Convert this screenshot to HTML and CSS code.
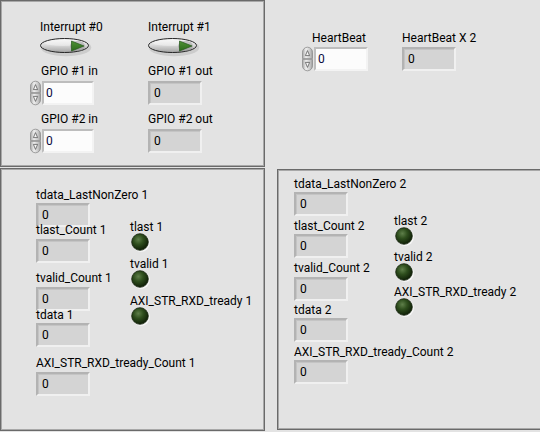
FILE: index.html
```html
<!DOCTYPE html>
<html>
<head>
<meta charset="utf-8">
<title>Front Panel</title>
<link rel="stylesheet" href="styles.css">
</head>
<body>
<svg class="defs" width="0" height="0" aria-hidden="true">
  <defs>
    <linearGradient id="gBtn" x1="0" y1="0" x2="0" y2="1">
      <stop offset="0" stop-color="#f8f8f8"/>
      <stop offset=".45" stop-color="#dddddd"/>
      <stop offset="1" stop-color="#a2a2a2"/>
    </linearGradient>
    <linearGradient id="gSpin" x1="0" y1="0" x2="1" y2="0">
      <stop offset="0" stop-color="#a6a6a6"/>
      <stop offset=".35" stop-color="#efefef"/>
      <stop offset=".75" stop-color="#c8c8c8"/>
      <stop offset="1" stop-color="#9a9a9a"/>
    </linearGradient>
    <radialGradient id="gLed" cx=".4" cy=".35" r=".65">
      <stop offset="0" stop-color="#5f7f4a"/>
      <stop offset=".45" stop-color="#2f4f1e"/>
      <stop offset="1" stop-color="#0f1f07"/>
    </radialGradient>
    <linearGradient id="gTri" x1="0" y1="0" x2="0" y2="1">
      <stop offset="0" stop-color="#4e9234"/>
      <stop offset="1" stop-color="#2c6a1c"/>
    </linearGradient>
    <symbol id="sBtn" viewBox="0 0 52 19">
      <ellipse cx="26" cy="9.6" rx="25.3" ry="8.6" fill="#b9b9b9" opacity=".55"/>
      <ellipse cx="24.5" cy="7.5" rx="24" ry="7" fill="url(#gBtn)" stroke="#262626" stroke-width="1"/>
      <ellipse cx="23" cy="5" rx="18" ry="3" fill="#ffffff" opacity=".35"/>
      <ellipse cx="37.5" cy="8" rx="7.5" ry="5.2" fill="#8f8f8f" opacity=".45"/>
      <path d="M31.5 3 L44 8 L31.5 13 Z" fill="url(#gTri)" stroke="#24561a" stroke-width=".7" stroke-linejoin="round"/>
    </symbol>
    <symbol id="sSpin" viewBox="0 0 13 26">
      <path d="M1.5 12.6 V6.2 A5 5 0 0 1 11.5 6.2 V12.6 Z" fill="url(#gSpin)" stroke="#8c8c8c" stroke-width=".8"/>
      <path d="M1.5 13.4 V19.8 A5 5 0 0 0 11.5 19.8 V13.4 Z" fill="url(#gSpin)" stroke="#8c8c8c" stroke-width=".8"/>
      <path d="M4.4 9.6 L6.5 4.6 L8.6 9.6 Z" fill="#f6f6f6" stroke="#5a5a5a" stroke-width=".8" stroke-linejoin="round"/>
      <path d="M4.4 16.4 L6.5 21.4 L8.6 16.4 Z" fill="#f6f6f6" stroke="#5a5a5a" stroke-width=".8" stroke-linejoin="round"/>
    </symbol>
    <symbol id="sLed" viewBox="0 0 20 20">
      <circle cx="10" cy="10" r="9" fill="#f6f6f6"/>
      <circle cx="9" cy="9" r="8.3" fill="url(#gLed)" stroke="#17250f" stroke-width=".8"/>
    </symbol>
  </defs>
</svg>

<div class="fp">
  <section class="panel p1">
    <div class="col c1">
      <div class="lbl in11">Interrupt #0</div>
      <svg class="btn in11 t4" width="52" height="19"><use href="#sBtn"/></svg>
      <div class="lbl in12 t7">GPIO #1 in</div>
      <div class="numrow t2">
        <svg class="spin" width="13" height="26"><use href="#sSpin"/></svg>
        <div class="num ctl w52">0</div>
      </div>
      <div class="lbl in12 t6">GPIO #2 in</div>
      <div class="numrow t2">
        <svg class="spin" width="13" height="26"><use href="#sSpin"/></svg>
        <div class="num ctl w52">0</div>
      </div>
    </div>
    <div class="col">
      <div class="lbl">Interrupt #1</div>
      <svg class="btn t4" width="52" height="19"><use href="#sBtn"/></svg>
      <div class="lbl t7">GPIO #1 out</div>
      <div class="numrow t2">
        <div class="num ind">0</div>
      </div>
      <div class="lbl t6">GPIO #2 out</div>
      <div class="numrow t2">
        <div class="num ind">0</div>
      </div>
    </div>
  </section>

  <div class="free">
    <div class="col c1">
      <div class="lbl in11">HeartBeat</div>
      <div class="numrow t1">
        <svg class="spin" width="13" height="26"><use href="#sSpin"/></svg>
        <div class="num ctl">0</div>
      </div>
    </div>
    <div class="col">
      <div class="lbl">HeartBeat X 2</div>
      <div class="numrow t1">
        <div class="num ind">0</div>
      </div>
    </div>
  </div>

  <section class="panel p3">
    <div class="col ca">
      <div class="lbl">tdata_LastNonZero 1</div>
      <div class="num ind t1">0</div>
      <div class="lbl tn4">tlast_Count 1</div>
      <div class="num ind t2">0</div>
      <div class="lbl t8">tvalid_Count 1</div>
      <div class="num ind t2">0</div>
      <div class="lbl tn3">tdata 1</div>
      <div class="num ind t1">0</div>
      <div class="lbl t9">AXI_STR_RXD_tready_Count 1</div>
      <div class="num ind t2">0</div>
    </div>
    <div class="col cb">
      <div class="lbl t32">tlast 1</div>
      <svg class="led tn1" width="20" height="20"><use href="#sLed"/></svg>
      <div class="lbl t4">tvalid 1</div>
      <svg class="led tn1" width="20" height="20"><use href="#sLed"/></svg>
      <div class="lbl t4">AXI_STR_RXD_tready 1</div>
      <svg class="led tn1" width="20" height="20"><use href="#sLed"/></svg>
    </div>
  </section>

  <section class="panel p4">
    <div class="col ca">
      <div class="lbl">tdata_LastNonZero 2</div>
      <div class="num ind t1">0</div>
      <div class="lbl t3">tlast_Count 2</div>
      <div class="num ind t1">0</div>
      <div class="lbl t3">tvalid_Count 2</div>
      <div class="num ind t2">0</div>
      <div class="lbl t2">tdata 2</div>
      <div class="num ind t1">0</div>
      <div class="lbl t3">AXI_STR_RXD_tready_Count 2</div>
      <div class="num ind t1">0</div>
    </div>
    <div class="col cb">
      <div class="lbl t37">tlast 2</div>
      <svg class="led tn1" width="20" height="20"><use href="#sLed"/></svg>
      <div class="lbl t3">tvalid 2</div>
      <svg class="led tn1" width="20" height="20"><use href="#sLed"/></svg>
      <div class="lbl t2">AXI_STR_RXD_tready 2</div>
      <svg class="led tn1" width="20" height="20"><use href="#sLed"/></svg>
    </div>
  </section>
</div>
</body>
</html>
```

FILE: styles.css
```css
* { box-sizing: border-box; }

html, body {
  margin: 0;
  padding: 0;
}

body {
  width: 540px;
  height: 432px;
  overflow: hidden;
  background: #e3e3e3;
  font-family: Roboto, "Liberation Sans", sans-serif;
  font-size: 12px;
  color: #000;
}

.defs {
  display: block;
  width: 0;
  height: 0;
  overflow: hidden;
}

.fp {
  display: grid;
  grid-template-columns: 265px 275px;
  grid-template-rows: 168px 264px;
}

.panel {
  border: 1px solid #6a6a6a;
  box-shadow: inset 1px 1px 0 #a8a8a8, inset -1px -1px 0 #a8a8a8;
  background: #e3e3e3;
}

.p1 {
  height: 167px;
  display: flex;
  padding: 19px 0 0 28px;
}

.free {
  display: flex;
  padding: 31px 0 0 36px;
}

.p3 {
  height: 263px;
  display: flex;
  padding: 19px 0 0 35px;
}

.p4 {
  width: 280px;
  height: 261px;
  margin: 1px 0 0 12px;
  display: flex;
  padding: 7px 0 0 16px;
}

.col {
  display: flex;
  flex-direction: column;
  align-items: flex-start;
}

.p1 .c1 { width: 119px; }
.free .c1 { width: 101px; }
.p3 .ca { width: 94px; }
.p4 .ca { width: 100px; }

.lbl {
  height: 14px;
  line-height: 14px;
  white-space: nowrap;
}

.in11 { margin-left: 11px; }
.in12 { margin-left: 12px; }

.btn, .spin, .led { display: block; flex: none; }
.led { margin-left: 1px; }

.numrow {
  display: flex;
  align-items: center;
  height: 26px;
}

.num {
  width: 54px;
  height: 24px;
  border: 2px solid;
  display: flex;
  align-items: center;
  line-height: 14px;
  flex: none;
}

.num.w52 { width: 52px; }

.ctl {
  background: #fcfcfc;
  border-color: #bdbdbd #f3f3f3 #f3f3f3 #bdbdbd;
  padding-left: 2px;
  color: #0a0a40;
}

.ind {
  background: #d4d4d4;
  border-color: #b3b3b3 #f0f0f0 #f0f0f0 #b3b3b3;
  box-shadow: inset 1px 1px 0 #c4c4c4;
  padding-left: 4px;
}

.t1 { margin-top: 1px; }
.t2 { margin-top: 2px; }
.t3 { margin-top: 3px; }
.t4 { margin-top: 4px; }
.t6 { margin-top: 6px; }
.t7 { margin-top: 7px; }
.t8 { margin-top: 8px; }
.t9 { margin-top: 9px; }
.t32 { margin-top: 32px; }
.t37 { margin-top: 37px; }
.tn1 { margin-top: -1px; }
.tn3 { margin-top: -3px; }
.tn4 { margin-top: -4px; }
```
